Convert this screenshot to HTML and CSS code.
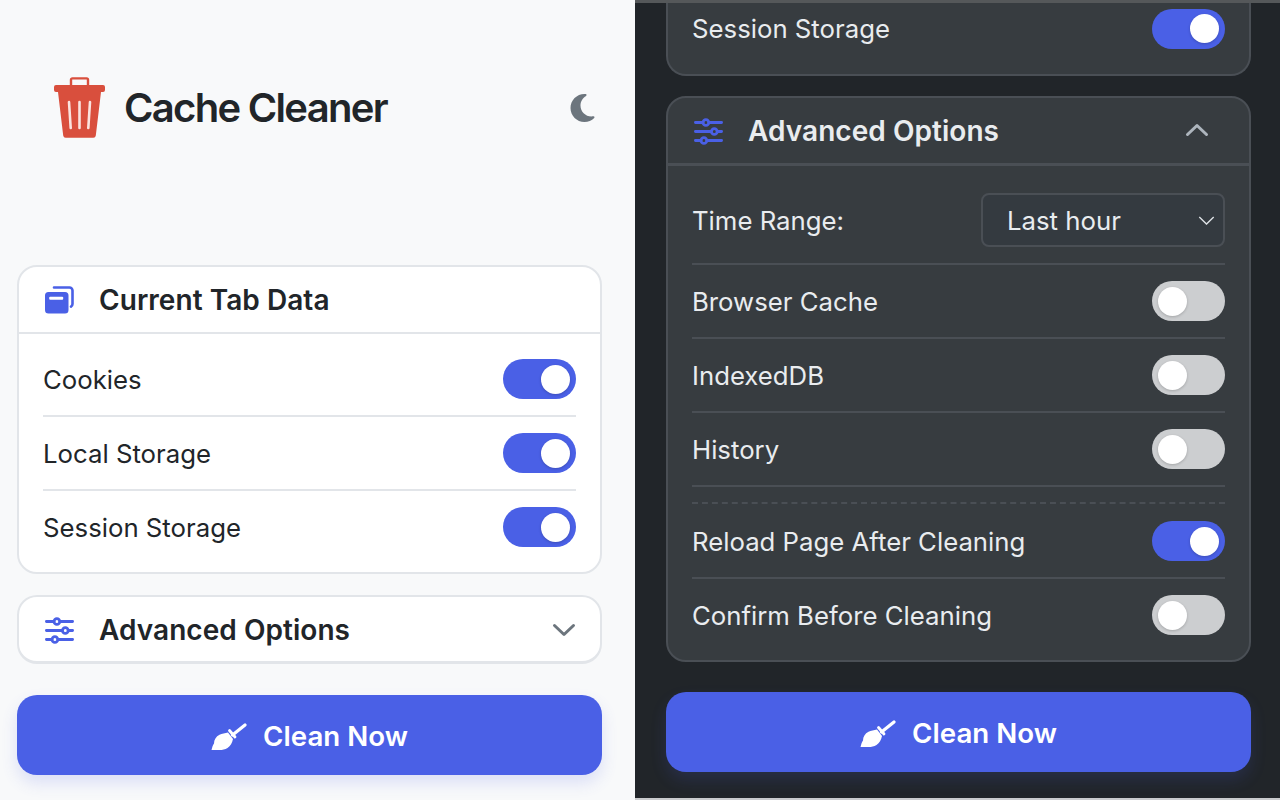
FILE: index.html
```html
<!DOCTYPE html>
<html lang="en">
<head>
<meta charset="utf-8">
<title>Cache Cleaner</title>
<link rel="stylesheet" href="styles.css">
</head>
<body>
<svg class="defs" width="0" height="0" aria-hidden="true">
  <symbol id="broom" viewBox="0 0 36 27"><path fill="currentColor" d="M.5 27c.8-2.500 1-4.500 2.500-6.500C3 17 5 13.500 8.500 11.800 11 10.600 14 10 17 9.500l5 6.500c-.8 4-2.500 7-5.500 9-2.500 1.500-5 2-8 2z"/><path fill="none" stroke="currentColor" stroke-width="3.200" stroke-linecap="round" d="M21.500 12L34 1.900"/><path fill="none" stroke="currentColor" stroke-width="2.800" stroke-linecap="round" d="M18.500 7.500l5.500 6.500"/></symbol>
  <symbol id="sliders" viewBox="0 0 29 27"><g fill="none" stroke="currentColor" stroke-width="2.800" stroke-linecap="round"><path d="M1.400 4.500h7.600M14.800 4.500h12.800M1.400 13.500h16M23.200 13.500h4.400M1.400 22.500h5.600M12.800 22.500h14.800"/><circle cx="11.900" cy="4.500" r="2.900"/><circle cx="20.300" cy="13.500" r="2.900"/><circle cx="9.900" cy="22.500" r="2.900"/></g></symbol>
</svg>
<main class="split">
  <section class="panel panel-light">
    <header class="app-header">
      <div class="brand">
        <svg class="trash" viewBox="0 0 51 61" aria-hidden="true">
          <path class="trash-handle" d="M17 8V2.800a1.400 1.400 0 0 1 1.400-1.400h14.200a1.400 1.400 0 0 1 1.400 1.400V8"/>
          <path class="trash-body" d="M2 8h47a2 2 0 0 1 2 2v3a2 2 0 0 1-2 2H2a2 2 0 0 1-2-2v-3a2 2 0 0 1 2-2zM4 15h43l-5.200 43.500a2.500 2.500 0 0 1-2.500 2.200H11.700a2.500 2.500 0 0 1-2.500-2.200z"/>
          <path class="trash-slit" d="M15 25l1.700 26M25.500 25v26M36 25l-1.700 26"/>
        </svg>
        <h1 class="title">Cache Cleaner</h1>
      </div>
      <svg class="moon" viewBox="0 0 384 512" aria-hidden="true"><path d="M223.500 32C100 32 0 132.300 0 256S100 480 223.500 480c60.600 0 115.500-24.200 155.800-63.400c5-4.900 6.300-12.500 3.100-18.700s-10.100-9.700-17-8.500c-9.800 1.700-19.800 2.600-30.100 2.600c-96.900 0-175.500-78.800-175.500-176c0-65.800 36-123.100 89.300-153.300c6.100-3.500 9.200-10.500 7.700-17.300s-7.300-11.900-14.300-12.500c-6.300-.5-12.600-.8-19-.8z"/></svg>
    </header>
    <div class="card card-current">
      <div class="card-head">
        <svg class="head-icon head-icon-tabs" viewBox="0 0 29 28" aria-hidden="true">
          <path class="tabs-back" d="M9 1.500h15.500a3 3 0 0 1 3 3v13.500a3 3 0 0 1-1.500 2.600"/>
          <path class="tabs-front" d="M3.500 6h16.500a3.500 3.500 0 0 1 3.500 3.500v14.500a3.500 3.500 0 0 1-3.500 3.500H3.500a3.500 3.500 0 0 1-3.500-3.500V9.500a3.500 3.500 0 0 1 3.500-3.500z"/>
          <rect class="tabs-slit" x="4.200" y="10.800" width="14" height="3" rx="1"/>
        </svg>
        <span class="card-title">Current Tab Data</span>
      </div>
      <div class="card-body">
        <div class="row"><span class="label">Cookies</span><span class="toggle on"></span></div>
        <div class="row"><span class="label">Local Storage</span><span class="toggle on"></span></div>
        <div class="row last"><span class="label">Session Storage</span><span class="toggle on"></span></div>
      </div>
    </div>
    <div class="card card-collapsed">
      <div class="card-head">
        <svg class="head-icon"><use href="#sliders"/></svg>
        <span class="card-title">Advanced Options</span>
        <svg class="chevron" viewBox="0 0 24 14" aria-hidden="true"><path d="M2.500 2.500L12 11.500l9.500-9"/></svg>
      </div>
    </div>
    <button class="clean"><svg class="broom"><use href="#broom"/></svg><span class="clean-text">Clean Now</span></button>
  </section>
  <section class="panel panel-dark">
    <div class="card card-clipped">
      <div class="row last"><span class="label">Session Storage</span><span class="toggle on"></span></div>
    </div>
    <div class="card card-open">
      <div class="card-head">
        <svg class="head-icon"><use href="#sliders"/></svg>
        <span class="card-title">Advanced Options</span>
        <svg class="chevron up" viewBox="0 0 24 14" aria-hidden="true"><path d="M2.500 11.500L12 2.500l9.500 9"/></svg>
      </div>
      <div class="card-body">
        <div class="row row-select"><span class="label">Time Range:</span>
          <div class="select"><span class="select-text">Last hour</span><svg class="select-caret" viewBox="0 0 18 10" aria-hidden="true"><path d="M1 1l8 8 8-8"/></svg></div>
        </div>
        <div class="row"><span class="label">Browser Cache</span><span class="toggle"></span></div>
        <div class="row"><span class="label">IndexedDB</span><span class="toggle"></span></div>
        <div class="row"><span class="label">History</span><span class="toggle"></span></div>
        <div class="divider"></div>
        <div class="row"><span class="label">Reload Page After Cleaning</span><span class="toggle on"></span></div>
        <div class="row last"><span class="label">Confirm Before Cleaning</span><span class="toggle"></span></div>
      </div>
    </div>
    <button class="clean"><svg class="broom"><use href="#broom"/></svg><span class="clean-text">Clean Now</span></button>
  </section>
</main>
</body>
</html>
```
FILE: styles.css
```css
* { box-sizing: border-box; }
html, body { margin: 0; height: 800px; overflow: hidden; }
body { font-family: Inter, "Noto Sans", sans-serif; background: #f8f9fa; }
.defs { position: absolute; }
.split { display: grid; grid-template-columns: 635px 645px; height: 800px; }
.panel { height: 800px; overflow: hidden; }
.panel-light { padding: 77px 33px 0 17px; background: #f8f9fa; color: #212529; }
.panel-dark { padding: 0 29px 0 31px; background: #212529; color: #e9ecef; border-top: 3px solid #55585a; border-bottom: 2px solid #c9cbcd; }

.app-header { display: flex; align-items: center; justify-content: space-between; height: 61px; padding: 0 7px 0 37px; margin-bottom: 127px; }
.brand { display: flex; align-items: center; gap: 19px; }
.trash { width: 51px; height: 61px; }
.trash-handle { fill: none; stroke: #d94f3d; stroke-width: 2.400; }
.trash-body { fill: #d94f3d; }
.trash-slit { fill: none; stroke: #fbe3df; stroke-width: 2.600; stroke-linecap: round; }
.title { margin: 0; font-size: 40px; line-height: 48px; font-weight: 600; letter-spacing: -1.700px; color: #212529; }
.moon { width: 25px; height: 32px; fill: #6c757d; }

.card { border: 2px solid #e2e5e9; border-radius: 20px; background: #fff; }
.card-current { height: 309px; margin-bottom: 21px; }
.card-collapsed { height: 69px; margin-bottom: 31px; border-bottom-width: 3px; }
.card-head { display: flex; align-items: center; height: 67px; padding: 0 25px 0 26px; border-bottom: 2px solid #e2e5e9; }
.card-collapsed .card-head { height: 64px; padding-top: 2px; border-bottom: 0; }
.head-icon { flex: none; width: 29px; height: 27px; margin-right: 25px; color: #4a60e6; }
.head-icon-tabs { height: 28px; }
.tabs-back { fill: none; stroke: #4a60e6; stroke-width: 2.600; stroke-linecap: round; }
.tabs-front { fill: #4a60e6; }
.tabs-slit { fill: #fff; }
.card-title { flex: 1; font-size: 28px; font-weight: 600; letter-spacing: .05px; }
.chevron { flex: none; width: 24px; height: 14px; margin-right: -1px; fill: none; stroke: #6c757d; stroke-width: 3; stroke-linecap: round; stroke-linejoin: round; }
.chevron.up { stroke: #adb5bd; margin-right: 15px; position: relative; top: -1px; }

.card-body { padding: 9px 24px 0; }
.row { display: flex; align-items: center; justify-content: space-between; height: 74px; border-bottom: 2px solid #e2e5e9; font-size: 25.750px; font-weight: 400; }
.row.last { border-bottom-color: transparent !important; }
.toggle { position: relative; flex: none; width: 73px; height: 40px; border-radius: 20px; background: #ccced0; }
.toggle::after { content: ""; position: absolute; top: 5.500px; left: 6px; width: 29px; height: 29px; border-radius: 50%; background: #fff; box-shadow: 0 1px 3px rgba(0,0,0,.2); }
.toggle.on { background: #4a60e6; }
.toggle.on::after { left: 38px; }

.clean { display: flex; align-items: center; justify-content: center; gap: 16px; width: 100%; height: 80px; border: 0; border-radius: 20px; background: #4a60e6; color: #fff; font-family: inherit; font-size: 27.700px; font-weight: 600; box-shadow: 0 8px 16px rgba(74,96,230,.16); }
.clean-text { padding-top: 2px; }
.broom { width: 36px; height: 27px; margin-top: 2px; }

.panel-dark .card { background: #373c40; border-color: #4a4f55; }
.card-clipped { height: 73px; margin-bottom: 20px; padding: 0 24px; border-top: 0 !important; border-radius: 0 0 20px 20px; }
.card-clipped .row { height: 53px; }
.card-open { height: 566px; margin-bottom: 30px; }
.panel-dark .card-head { border-color: #4a4f55; height: 68px; border-bottom-width: 3px; padding-top: 1px; }
.panel-dark .card-body { padding-top: 0; }
.panel-dark .row { border-color: #4a4f55; }
.panel-dark .row-select { height: 99px; padding-top: 10px; }
.panel-dark .row-select .label { padding-top: 2px; }
.select { display: flex; align-items: center; justify-content: space-between; width: 244px; height: 54px; padding: 2px 8px 0 24px; border: 2px solid #4a4f55; border-radius: 8px; background: #343a40; }
.select-caret { width: 17px; height: 9px; fill: none; stroke: #dee2e6; stroke-width: 1.500; }
.divider { height: 17px; margin-bottom: 1px; border-bottom: 2px dashed #4a4f55; }
```
